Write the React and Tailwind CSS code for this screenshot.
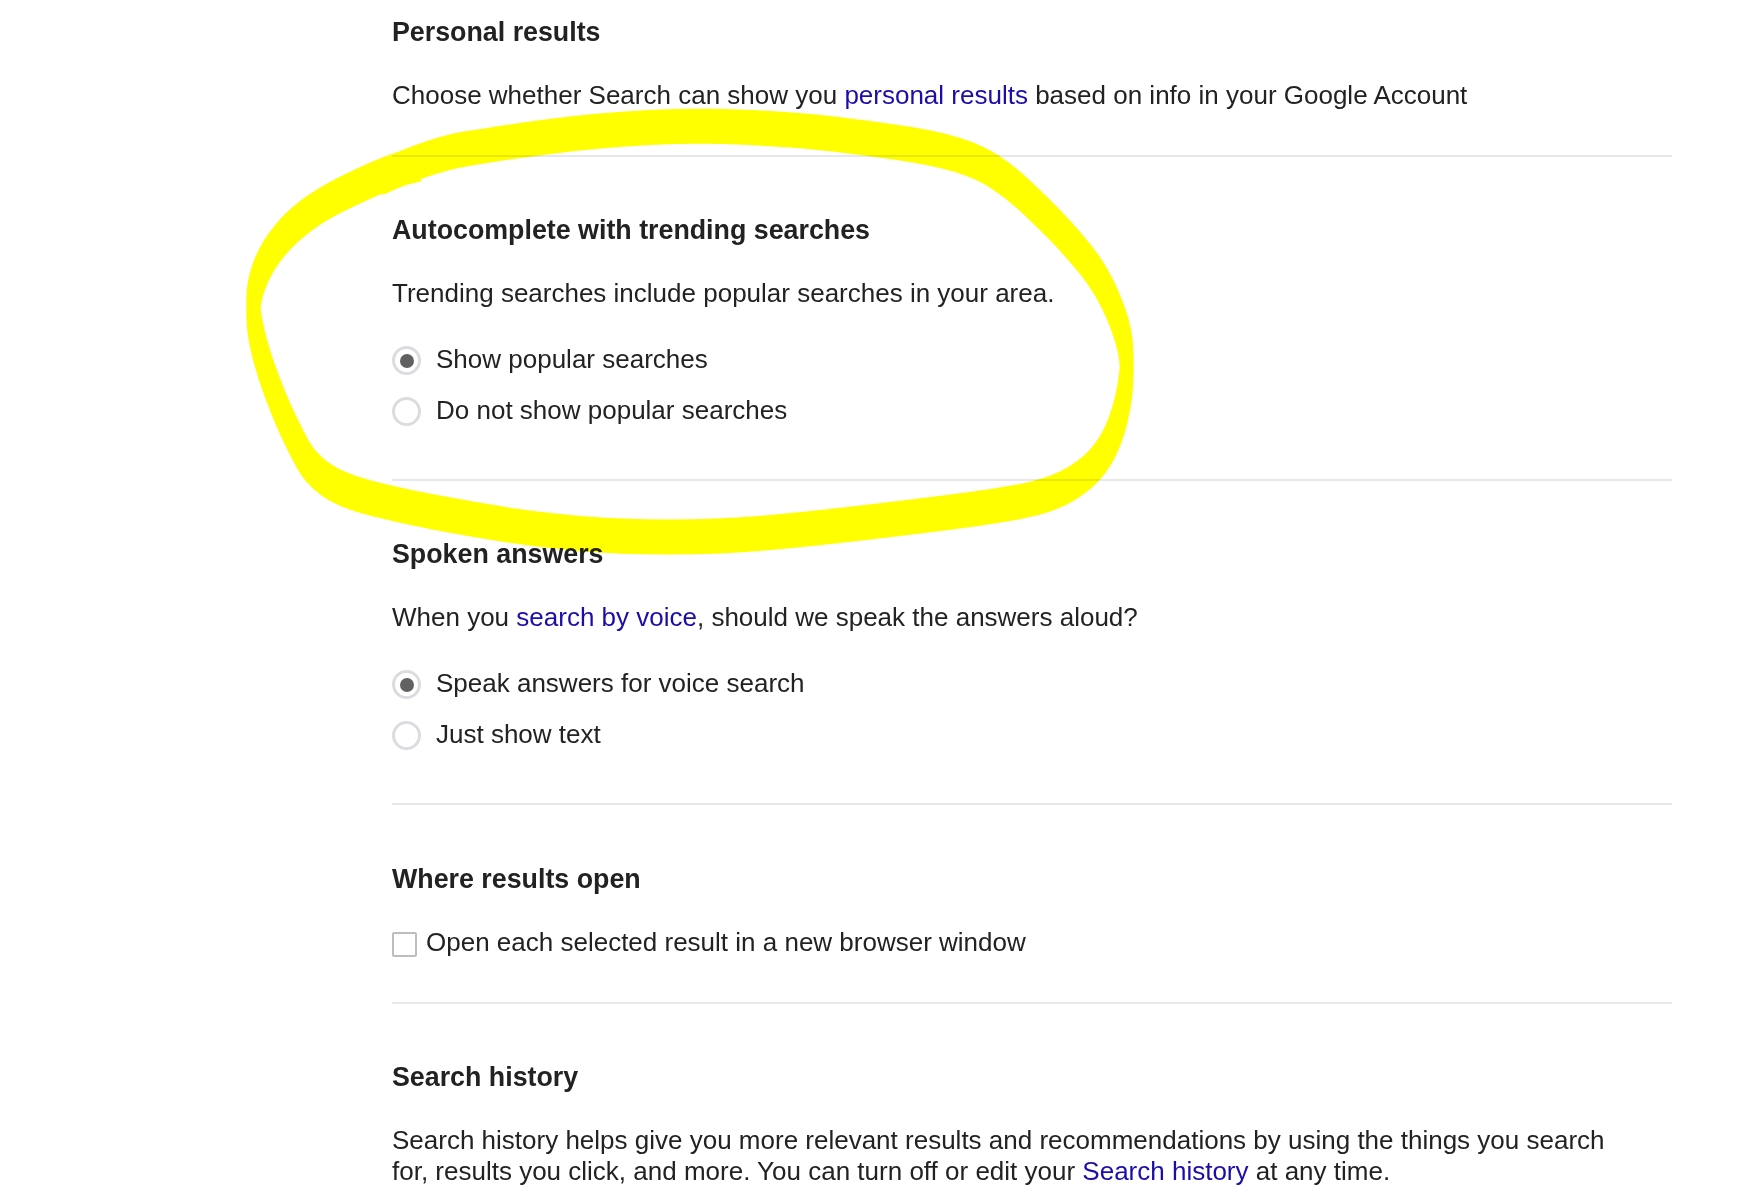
import React from 'react';

// centre line of the hand-drawn highlighter loop (page coordinates)
const LOOP = [
  [380, 178], [430, 155], [500, 143], [600, 130], [700, 125], [800, 130],
  [867, 138], [935, 148], [980, 162], [1010, 182], [1035, 205], [1068, 238],
  [1102, 280], [1124, 332], [1128, 370], [1122, 410], [1110, 445], [1090, 472],
  [1055, 494], [1000, 506], [896, 519], [800, 530], [718, 537], [620, 537],
  [540, 530], [470, 519], [397, 505], [340, 490], [310, 468], [295, 440],
  [280, 408], [262, 360], [252, 315], [255, 285], [268, 255], [290, 228],
  [320, 205], [360, 185], [395, 170], [420, 164],
];

const smoothPath = (pts) => {
  let d = `M${pts[0][0]} ${pts[0][1]}`;
  for (let i = 1; i < pts.length - 1; i++) {
    const [x, y] = pts[i];
    const mx = (x + pts[i + 1][0]) / 2;
    const my = (y + pts[i + 1][1]) / 2;
    d += ` Q${x} ${y} ${mx} ${my}`;
  }
  const last = pts[pts.length - 1];
  return d + ` L${last[0]} ${last[1]}`;
};

// highlighter nib is tall and narrow, so stack a few strokes vertically
const NIB = [-11, -7.5, -4, 0, 4, 7.5, 11];

const Highlight = () => {
  const d = smoothPath(LOOP);
  return (
    <svg
      className="absolute left-0 top-0 pointer-events-none mix-blend-multiply"
      width="1751"
      height="1196"
      viewBox="0 0 1751 1196"
    >
      <g fill="none" stroke="#ffff00" strokeWidth="13" strokeLinejoin="round">
        {NIB.map((dy) => (
          <path key={dy} d={d} transform={`translate(0 ${dy})`} />
        ))}
      </g>
    </svg>
  );
};

const Section = ({ title, first, tall, children }) => {
  let cls = 'border-t-2 border-[#e8e8e8] pt-[58px] pb-[44px]';
  if (first) cls = 'pt-[17px] pb-[44px]';
  if (tall) cls = 'border-t-2 border-[#e8e8e8] pt-[59px] pb-[44px]';
  return (
    <section className={cls}>
      <h2 className="text-[26.8px] leading-[31px] font-bold text-[#222]">{title}</h2>
      {children}
    </section>
  );
};

const Desc = ({ children }) => (
  <p className="mt-[32px] text-[26px] leading-[31px]">{children}</p>
);

const Link = ({ children }) => (
  <a href="#" className="text-[#1a0dab]">{children}</a>
);

const Radio = ({ checked, label }) => (
  <label className="flex items-center h-[31px]">
    <span className="mt-[2px] w-[29px] h-[29px] rounded-full border-[3px] border-[#dadce0] flex items-center justify-center">
      {checked && <span className="w-[14px] h-[14px] rounded-full bg-[#616161]" />}
    </span>
    <span className="ml-[15px] text-[26px] leading-[31px]">{label}</span>
  </label>
);

const RadioGroup = ({ options, value }) => (
  <div className="mt-[35px] mb-[9px] flex flex-col gap-[20px]">
    {options.map((o) => (
      <Radio key={o} label={o} checked={o === value} />
    ))}
  </div>
);

export default function App() {
  return (
    <div className="relative h-[1196px] overflow-hidden bg-white text-[#222] font-['Liberation_Sans',Arial,sans-serif]">
      <div className="ml-[392px] w-[1280px]">
        <Section title="Personal results" first>
          <Desc>
            Choose whether Search can show you <Link>personal results</Link> based on info in your Google Account
          </Desc>
        </Section>

        <Section title="Autocomplete with trending searches">
          <Desc>Trending searches include popular searches in your area.</Desc>
          <RadioGroup
            options={['Show popular searches', 'Do not show popular searches']}
            value="Show popular searches"
          />
        </Section>

        <Section title="Spoken answers">
          <Desc>
            When you <Link>search by voice</Link>, should we speak the answers aloud?
          </Desc>
          <RadioGroup
            options={['Speak answers for voice search', 'Just show text']}
            value="Speak answers for voice search"
          />
        </Section>

        <Section title="Where results open" tall>
          <label className="mt-[32px] flex items-center h-[31px]">
            <span className="mt-[4px] w-[25px] h-[25px] rounded-[2px] border-2 border-[#bdbdbd] bg-white" />
            <span className="ml-[9px] text-[26px] leading-[31px]">
              Open each selected result in a new browser window
            </span>
          </label>
        </Section>

        <Section title="Search history">
          <p className="mt-[32px] text-[26px] leading-[31px]">
            Search history helps give you more relevant results and recommendations by using the things you search
            <br />
            for, results you click, and more. You can turn off or edit your <Link>Search history</Link> at any time.
          </p>
        </Section>
      </div>
      <Highlight />
    </div>
  );
}
